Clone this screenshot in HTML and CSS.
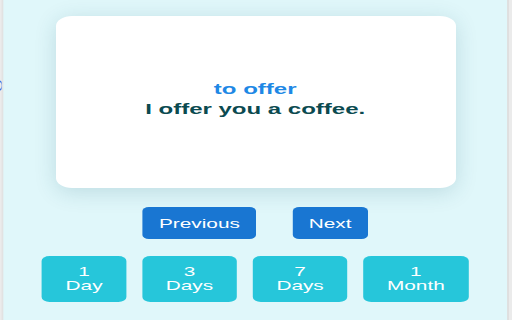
FILE: index.html
```html
<!DOCTYPE html>
<html lang="en">
<head>
<meta charset="utf-8">
<title>Flashcards</title>
<link rel="stylesheet" href="styles.css">
</head>
<body>
<div class="app">
  <div class="edge edge-left"><span class="edge-arc"></span></div>
  <main class="main">
    <section class="card">
      <div class="word">to offer</div>
      <div class="sentence">I offer you a coffee.</div>
    </section>
    <nav class="nav-row">
      <button class="nav-btn">Previous</button>
      <button class="nav-btn">Next</button>
    </nav>
    <div class="interval-row">
      <button class="interval-btn">1<br>Day</button>
      <button class="interval-btn">3<br>Days</button>
      <button class="interval-btn">7<br>Days</button>
      <button class="interval-btn">1<br>Month</button>
    </div>
  </main>
  <div class="edge edge-right"></div>
</div>
</body>
</html>
```

FILE: styles.css
```css
html, body {
  margin: 0;
  padding: 0;
  width: 512px;
  height: 320px;
  overflow: hidden;
  background: #e0f7fa;
}

.app {
  width: 320px;
  height: 320px;
  display: grid;
  grid-template-columns: 2px 1fr 3px;
  transform: scaleX(1.6);
  transform-origin: 0 0;
  font-family: "Liberation Sans", Arial, sans-serif;
}

.edge {
  background: #ebebeb;
  position: relative;
  overflow: hidden;
}

.edge-left {
  border-right: 1px solid #e2e2e2;
}

.edge-arc {
  position: absolute;
  left: -5px;
  top: 80px;
  width: 5px;
  height: 9px;
  border: 1.5px solid #3b78e7;
  border-radius: 50%;
}

.edge-right {
  border-left: 1px solid #dddddd;
}

.main {
  display: flex;
  flex-direction: column;
  align-items: center;
  padding-top: 16px;
}

.card {
  width: 250px;
  height: 172px;
  box-sizing: border-box;
  background: #ffffff;
  border-radius: 10px;
  box-shadow: 0 4px 18px rgba(0, 80, 100, 0.16);
  display: flex;
  flex-direction: column;
  align-items: center;
  justify-content: center;
  padding-bottom: 6px;
  font-weight: bold;
  font-size: 15px;
  line-height: 20px;
}

.word {
  color: #1e88e5;
}

.sentence {
  color: #0b4a50;
}

.nav-row {
  display: flex;
  gap: 23px;
  margin-top: 19px;
}

.nav-btn {
  height: 32px;
  padding: 0 10px;
  border: none;
  border-radius: 4px;
  background: #1976d2;
  color: #ffffff;
  font-family: inherit;
  font-size: 13px;
}

.interval-row {
  display: flex;
  gap: 9.5px;
  margin-top: 17px;
}

.interval-btn {
  height: 46px;
  padding: 0 15px;
  border: none;
  border-radius: 5px;
  background: #26c6da;
  color: #ffffff;
  font-family: inherit;
  font-size: 13px;
  line-height: 14px;
}
```
